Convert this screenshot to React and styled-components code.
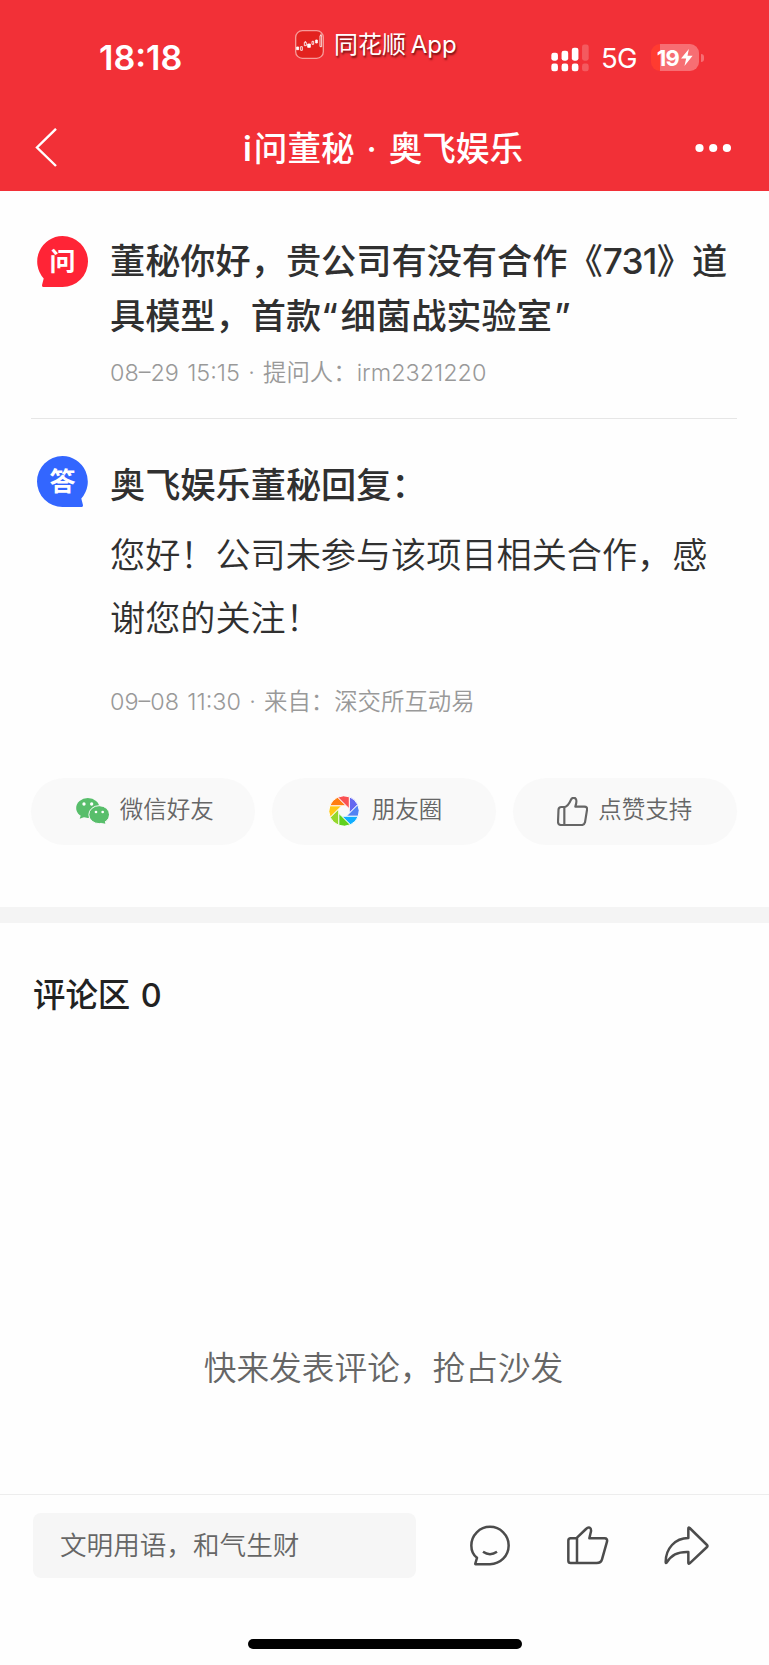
import { createGlobalStyle, styled } from "styled-components";

const red = "#f23037";
const textDark = "#303030";
const textGrey = "#999999";
const pill = "#f9f9f9";

const GlobalStyle = createGlobalStyle`
  * {
    box-sizing: border-box;
  }
  body {
    margin: 0;
    background-color: #fefefe;
    color: ${textDark};
    font-family: Inter, "Noto Sans CJK SC", sans-serif;
  }
  svg {
    display: block;
    flex: none;
  }
  h1, h2, p {
    margin: 0;
  }
  button {
    border: none;
    padding: 0;
    background: none;
    font: inherit;
    color: inherit;
  }
`;

const Screen = styled.div`
  width: 769px;
  height: 1665px;
  display: flex;
  flex-direction: column;
  overflow: hidden;
`;

const Header = styled.header`
  height: 191px;
  background-color: ${red};
  color: white;
`;

const StatusBar = styled.div`
  height: 108px;
  display: grid;
  grid-template-columns: 196px 256px 1fr;
  padding: 28px 0 0 99px;
`;

const Time = styled.span`
  font-size: 34.1px;
  font-weight: 600;
  line-height: 60px;
`;

const AppLabel = styled.div`
  height: 33px;
  display: flex;
  align-items: center;
  gap: 10px;
  font-size: 24px;
  line-height: 32px;
  word-spacing: -2px;
  text-shadow: 1px 2px 2px rgba(60, 0, 0, 0.7);
  white-space: nowrap;
`;

const Indicators = styled.div`
  height: 59px;
  display: flex;
  align-items: center;
`;

const Network = styled.span`
  flex: none;
  width: 62px;
  padding-left: 12px;
  font-size: 27.5px;
  letter-spacing: -0.6px;
`;

const Battery = styled.div`
  flex: none;
  width: 48px;
  height: 27px;
  display: flex;
  align-items: center;
  justify-content: center;
  gap: 2px;
  border-radius: 9px;
  background: linear-gradient(to right, #ff3b30 9px, #f76e73 9px);
  font-size: 22px;
  font-weight: 700;
  letter-spacing: -0.6px;
`;

const BatteryCap = styled.i`
  flex: none;
  width: 3px;
  height: 8px;
  margin-left: 2px;
  border-radius: 0 3px 3px 0;
  background-color: #f76e73;
`;

const NavBar = styled.nav`
  height: 80px;
  display: flex;
  align-items: center;
  justify-content: space-between;
  padding: 0 37px 0 35px;

  svg {
    margin-bottom: 1px;
  }
`;

const Title = styled.h1`
  padding: 1px 0 0 14px;
  font-size: 33.6px;
  font-weight: 500;
  line-height: 50px;
  word-spacing: 3px;
  white-space: nowrap;

  span {
    font-weight: 600;
    letter-spacing: 2px;
  }
`;

const Post = styled.main`
  height: 716px;
  padding: 42px 32px 0 31px;
`;

const Entry = styled.section`
  display: flex;
  gap: 22px;
  height: ${({ height }) => height};
  padding: 0 0 0 6px;
`;

const BadgeBox = styled.div`
  position: relative;
  flex: none;
  width: 51px;
  height: 51px;
  margin-top: ${({ top }) => top};
  color: ${({ color }) => color};

  svg {
    position: absolute;
    inset: 0;
    transform: ${({ flip }) => (flip ? "scaleX(-1)" : "none")};
  }
  span {
    position: relative;
    display: block;
    color: white;
    font-size: 26px;
    font-weight: 700;
    line-height: 52px;
    text-align: center;
  }
`;

const Question = styled.h2`
  padding-top: 1px;
  font-size: 35.2px;
  font-weight: 500;
  line-height: 54.6px;
  white-space: nowrap;
`;

const Spaced = styled.span`
  letter-spacing: ${({ gap }) => gap};
`;

const Meta = styled.p`
  margin-top: ${({ top }) => top};
  color: ${textGrey};
  font-size: 23.4px;
  font-weight: 350;
  line-height: 34px;
  word-spacing: 1.7px;
  white-space: nowrap;
`;

const Divider = styled.hr`
  height: 1px;
  margin: 0;
  border: none;
  background-color: #e6e6e6;
`;

const AnswerTitle = styled.h2`
  margin-top: 41px;
  font-size: 35.2px;
  font-weight: 500;
  line-height: 50px;
`;

const AnswerText = styled.p`
  margin-top: 14px;
  font-size: 35.15px;
  font-weight: 350;
  line-height: 62.6px;
  white-space: nowrap;
`;

const Actions = styled.div`
  display: grid;
  grid-template-columns: repeat(3, 1fr);
  gap: 16.5px;
`;

const ActionButton = styled.button`
  height: 67px;
  display: flex;
  align-items: center;
  justify-content: center;
  gap: ${({ gap }) => gap};
  padding: 0 ${({ shift }) => shift || "0px"} 7px 3px;
  border-radius: 34px;
  background-color: ${pill};
  color: #666666;
  font-size: 23.5px;
  font-weight: 350;

  svg {
    position: relative;
    top: 3px;
  }
`;

const Comments = styled.section`
  flex: 1;
  border-top: 16px solid #f4f4f4;
`;

const CommentsTitle = styled.h2`
  padding: 48px 0 0 33px;
  color: #222222;
  font-size: 32.4px;
  font-weight: 500;
  line-height: 50px;
  word-spacing: 2px;
`;

const Empty = styled.p`
  margin-top: 322px;
  padding-right: 2px;
  color: #666666;
  font-size: 32.7px;
  font-weight: 350;
  line-height: 50px;
  text-align: center;
`;

const Footer = styled.footer`
  height: 171px;
  border-top: 1px solid #ededed;
`;

const Toolbar = styled.div`
  height: 100px;
  display: flex;
  align-items: center;
  padding-left: 33px;
`;

const Input = styled.div`
  width: 383px;
  height: 65px;
  padding-left: 27px;
  margin-right: 54px;
  border-radius: 8px;
  background-color: #f6f6f6;
  color: #666666;
  font-size: 26.6px;
  font-weight: 350;
  line-height: 65px;
`;

const Tools = styled.div`
  display: flex;
  align-items: center;
  gap: 57px;

  svg:last-child {
    margin-left: -2px;
  }
`;

const HomeIndicator = styled.div`
  width: 274px;
  height: 10px;
  margin: 44px auto 0;
  border-radius: 5px;
  background-color: black;
`;

function Badge({ children, ...props }) {
  return (
    <BadgeBox {...props}>
      <svg width="51" height="51" viewBox="0 0 51 51" fill="currentColor">
        <path d="M25.5 0a25.5 25.5 0 1 1 0 51H7c-1.5 0-2.2-.8-1.9-2.2l1.6-6.3A25.5 25.5 0 0 1 25.5 0Z" />
      </svg>
      <span>{children}</span>
    </BadgeBox>
  );
}

const AppIcon = () => (
  <svg width="29" height="29" viewBox="0 0 87 87" fill="none">
    <rect x="2" y="2" width="83" height="83" rx="20" fill="#e3221f" stroke="#f79a98" strokeWidth="4" />
    <g stroke="#fff" strokeWidth="2.5">
      <path d="M5 51h6v8H5zM38 42h8v10h-8zM62 30h5v9h-5z" fill="#fff" />
      <path d="M17 50h5v11h-5zM28 37h6v10h-6zM51 34h5v9h-5zM75 17h5v33h-5zM31 33v4M78 11v6" />
    </g>
  </svg>
);

const SignalIcon = () => (
  <svg width="38" height="28" viewBox="0 0 115 82" fill="#fff">
    {[
      [1, 25],
      [32, 19],
      [63, 10],
      [94, 0],
    ].map(([x, y]) => (
      <g key={x} opacity={x === 94 ? 0.2 : 1}>
        <rect x={x} y={y} width="20" height={49 - y} rx="7" />
        <rect x={x} y="58" width="20" height="23" rx="7" />
      </g>
    ))}
  </svg>
);

const BoltIcon = () => (
  <svg width="12" height="17" viewBox="0 0 35 50" fill="#fff">
    <path d="M23 0 0 28h15l-5 22 24-30H19Z" />
  </svg>
);

const BackIcon = () => (
  <svg width="22" height="39" viewBox="0 0 22 39" fill="none" stroke="#fff" strokeWidth="2.4">
    <path d="M21 .8 2 19.5l19 18.5" />
  </svg>
);

const MoreIcon = () => (
  <svg width="37" height="10" viewBox="0 0 37 10" fill="#fff">
    <circle cx="4.5" cy="5" r="4.1" />
    <circle cx="18.2" cy="5" r="4.1" />
    <circle cx="31.9" cy="5" r="4.1" />
  </svg>
);

const WechatIcon = () => (
  <svg width="33" height="26" viewBox="228 118 99 78" fill="#58be6b">
    <ellipse cx="263.5" cy="148" rx="35" ry="30" />
    <path d="M243 168l-4 12 16-6z" />
    <ellipse cx="297.5" cy="168" rx="31" ry="27" stroke={pill} strokeWidth="3" />
    <path d="M302 192l14 3-2-10z" />
    <g fill="#fff">
      <circle cx="252" cy="136" r="5" />
      <circle cx="275" cy="136" r="5" />
      <circle cx="288" cy="160" r="4" />
      <circle cx="308" cy="160" r="4" />
    </g>
  </svg>
);

const bladeColors = [
  "#6467f0",
  "#5283f3",
  "#10aeff",
  "#5fd11e",
  "#95d72c",
  "#ffc817",
  "#ff7d12",
  "#fa5152",
];

const MomentsIcon = () => (
  <svg width="30" height="30" viewBox="-15 -15 30 30" stroke="#fff" strokeWidth="0.9">
    {bladeColors.map((color, index) => (
      <path
        key={color}
        d="M5.3-2.2V-14.2A15.2 15.2 0 0 1 13.8-6.3L5.3 2.2Z"
        fill={color}
        transform={`rotate(${index * 45})`}
      />
    ))}
  </svg>
);

const LikeIcon = () => (
  <svg width="31" height="29" viewBox="522 107 93 87" fill="none" stroke="#666" strokeWidth="6.5" strokeLinejoin="round">
    <path d="M546 137h-11q-8 0-8.5 8l-1.5 37q0 9 9 9h62q8 0 10-8l6-37q2-10-8-10h-27c4-12 5-19 1-24-5-5-12-2-14 3-5 12-10 20-20 23v52" />
  </svg>
);

const CommentIcon = () => (
  <svg width="40" height="41" viewBox="119 134 120 122" fill="none" stroke="#4c4c4c" strokeWidth="7.5" strokeLinejoin="round">
    <path d="M179 251h-43q-2 0-1-2l5-17C128 223 123 209 123 195a56 56 0 1 1 56 56Z" />
    <path d="M158 214q21 14 42 0" />
  </svg>
);

const ThumbIcon = () => (
  <svg width="42" height="39" viewBox="411 137 126 117" fill="none" stroke="#4c4c4c" strokeWidth="7.5" strokeLinejoin="round">
    <path d="M440 174h-18q-7 0-7 7v60q0 7 7 7h78q13 0 16-11l15-53q2-10-7-10h-46l5-21q1-9-4-11-5-2-11 4l-27 26v76" />
  </svg>
);

const ShareIcon = () => (
  <svg width="45" height="39" viewBox="701 136 135 117" fill="none" stroke="#4c4c4c" strokeWidth="7.5" strokeLinejoin="round">
    <path d="M774 144q0-5 4-2l52 51q3 3 0 6l-52 49q-4 3-4-2v-32c-34-1-51 10-65 32q-3 3-3-2c0-40 28-72 68-72z" />
  </svg>
);

export default function App() {
  return (
    <>
      <GlobalStyle />
      <Screen>
        <Header>
          <StatusBar>
            <Time>18:18</Time>
            <AppLabel>
              <AppIcon />
              <span>同花顺 App</span>
            </AppLabel>
            <Indicators>
              <SignalIcon />
              <Network>5G</Network>
              <Battery>
                19
                <BoltIcon />
              </Battery>
              <BatteryCap />
            </Indicators>
          </StatusBar>
          <NavBar>
            <BackIcon />
            <Title>
              <span>i</span>问董秘 · 奥飞娱乐
            </Title>
            <MoreIcon />
          </NavBar>
        </Header>

        <Post>
          <Entry height="185px">
            <Badge color="#ff2436" top="3px">
              问
            </Badge>
            <div>
              <Question>
                董秘你好，贵公司有没有合作《<Spaced gap="-0.7px">731</Spaced>》道
                <br />
                具模型，首款<Spaced gap="3px">“</Spaced>细菌战实验<Spaced gap="2px">室</Spaced>”
              </Question>
              <Meta top="13px">08–29 15:15 · 提问人：irm2321220</Meta>
            </div>
          </Entry>
          <Divider />
          <Entry height="359px">
            <Badge color="#3366ff" top="37px" flip>
              答
            </Badge>
            <div>
              <AnswerTitle>奥飞娱乐董秘回复：</AnswerTitle>
              <AnswerText>
                您好！公司未参与该项目相关合作，感
                <br />
                谢您的关注！
              </AnswerText>
              <Meta top="36px">09–08 11:30 · 来自：深交所互动易</Meta>
            </div>
          </Entry>
          <Actions>
            <ActionButton gap="11px">
              <WechatIcon />
              微信好友
            </ActionButton>
            <ActionButton gap="13px">
              <MomentsIcon />
              朋友圈
            </ActionButton>
            <ActionButton gap="10px" shift="3px">
              <LikeIcon />
              点赞支持
            </ActionButton>
          </Actions>
        </Post>

        <Comments>
          <CommentsTitle>评论区 0</CommentsTitle>
          <Empty>快来发表评论，抢占沙发</Empty>
        </Comments>

        <Footer>
          <Toolbar>
            <Input>文明用语，和气生财</Input>
            <Tools>
              <CommentIcon />
              <ThumbIcon />
              <ShareIcon />
            </Tools>
          </Toolbar>
          <HomeIndicator />
        </Footer>
      </Screen>
    </>
  );
}
